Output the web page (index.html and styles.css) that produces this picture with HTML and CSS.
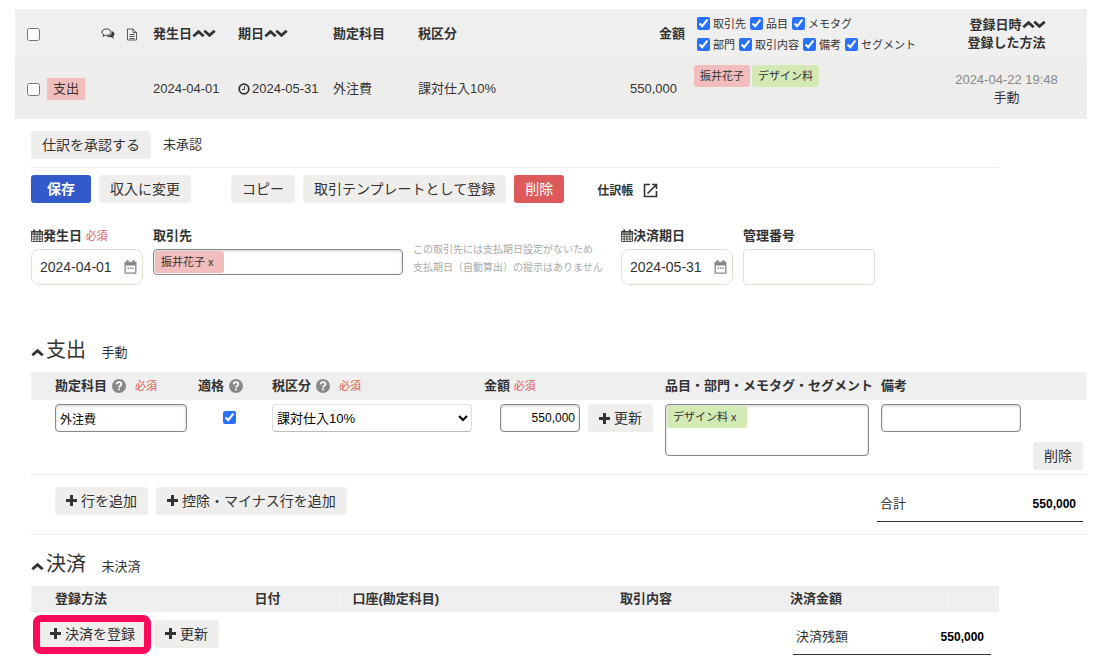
FILE: index.html
```
<!DOCTYPE html>
<html lang="ja">

<head>
    <meta charset="UTF-8">
    <meta name="viewport" content="width=device-width, initial-scale=1.0">
    <title>取引の詳細</title>
    <link rel="stylesheet" href="styles.css">
</head>

<body>
    <!-- Icons -->
    <svg class="sprite" aria-hidden="true">
        <symbol id="i-up" viewBox="0 0 13 9"><path d="M1.300 7.200 6.500 2.600l5.200 4.600" fill="none" stroke="currentColor" stroke-width="2.800"/></symbol>
        <symbol id="i-down" viewBox="0 0 13 9"><path d="M1.300 1.800l5.200 4.600 5.200-4.600" fill="none" stroke="currentColor" stroke-width="2.800"/></symbol>
        <symbol id="i-plus" viewBox="0 0 11 11"><path d="M4 0h3v4h4v3H7v4H4V7H0V4h4z" fill="currentColor"/></symbol>
        <symbol id="i-comments" viewBox="0 0 14 12"><path d="M5.500 1C2.900 1 1 2.400 1 4.200c0 1.100.7 2 1.800 2.600L2.200 8.400l2.300-1.100c.3 0 .7.1 1 .1 2.600 0 4.500-1.400 4.500-3.200S8.100 1 5.500 1z" fill="none" stroke="currentColor"/><path d="M11 3.200c1.500.6 2.500 1.600 2.500 2.900 0 1-.6 1.800-1.500 2.400l1 1.900c-1.300-.2-2.300-.7-3-1.300-1.800.2-3.500-.1-4.500-1 3.500 0 5.700-1.800 5.500-4.900z" fill="currentColor"/></symbol>
        <symbol id="i-file" viewBox="0 0 12 13"><path d="M1.500 1h5.500l3.500 3.500V12h-9zM7 1v3.500h3.500M3.500 6.500h5M3.500 8.500h5M3.500 10.500h5" fill="none" stroke="currentColor" stroke-width=".8"/></symbol>
        <symbol id="i-clock" viewBox="0 0 12 12"><circle cx="6" cy="6" r="4.800" fill="none" stroke="currentColor" stroke-width="1.800"/><path d="M6.500 3.200v3.300H4" fill="none" stroke="currentColor"/></symbol>
        <symbol id="i-cal" viewBox="0 0 12 13"><path d="M.5 2.500h11v10H.5zM.5 5.500h11M.5 7.800h11M.5 10.100h11M3.200 5.500v7M6 5.500v7M8.800 5.500v7" fill="none" stroke="currentColor" stroke-width=".8"/><path d="M0 2h12v3H0z" fill="currentColor" opacity=".6"/><path d="M3.200.5v3M8.800.5v3" stroke="currentColor" stroke-width="1.800"/></symbol>
        <symbol id="i-date" viewBox="0 0 13 14"><path d="M1.200 2.500h10.600v10.700H1.200z" fill="none" stroke="currentColor" stroke-width="1.300"/><path d="M1 2h11v3.500H1zM2.500 0h2v3h-2zM8.500 0h2v3h-2zM3.500 7.500h1.500V9H3.500zM5.800 7.500h1.500V9H5.800zM8.100 7.500h1.500V9H8.100z" fill="currentColor"/></symbol>
        <symbol id="i-help" viewBox="0 0 14 14"><circle cx="7" cy="7" r="7" fill="#888"/><path d="M4.600 5.400C4.700 3.900 5.700 3.200 7 3.200s2.400.8 2.400 2C9.400 6.700 7 6.800 7 8.600" fill="none" stroke="#fff" stroke-width="1.700"/><path d="M6.100 9.600h1.800v1.700H6.100z" fill="#fff"/></symbol>
        <symbol id="i-open" viewBox="0 0 15 15"><path d="M7 1.500H1.500v12h12V8M9 1.500h4.500V6M13 2 4.500 10.500" fill="none" stroke="currentColor" stroke-width="1.600"/></symbol>
    </svg>

    <!-- Deal list -->
    <table class="deals">
        <colgroup>
            <col class="w-check">
            <col class="w-type">
            <col class="w-icons">
            <col class="w-date">
            <col class="w-due">
            <col class="w-account">
            <col>
            <col class="w-amount">
            <col class="w-tags">
            <col class="w-created">
        </colgroup>
        <thead>
            <tr>
                <th class="check"><input type="checkbox" aria-label="すべて選択"></th>
                <th></th>
                <th><span class="icon-pair"><svg class="icon-comments"><use href="#i-comments"/></svg><svg class="icon-file"><use href="#i-file"/></svg></span></th>
                <th>発生日<svg class="chevron"><use href="#i-up"/></svg><svg class="chevron"><use href="#i-down"/></svg></th>
                <th>期日<svg class="chevron"><use href="#i-up"/></svg><svg class="chevron"><use href="#i-down"/></svg></th>
                <th>勘定科目</th>
                <th>税区分</th>
                <th class="amount-head">金額</th>
                <th class="filters">
                    <div class="filter-row">
                        <label><input type="checkbox" checked>取引先</label>
                        <label><input type="checkbox" checked>品目</label>
                        <label><input type="checkbox" checked>メモタグ</label>
                    </div>
                    <div class="filter-row">
                        <label><input type="checkbox" checked>部門</label>
                        <label><input type="checkbox" checked>取引内容</label>
                        <label><input type="checkbox" checked>備考</label>
                        <label><input type="checkbox" checked>セグメント</label>
                    </div>
                </th>
                <th class="created">登録日時<svg class="chevron"><use href="#i-up"/></svg><svg class="chevron"><use href="#i-down"/></svg><br>登録した方法</th>
            </tr>
        </thead>
        <tbody>
            <tr>
                <td class="check"><input type="checkbox" aria-label="取引を選択"></td>
                <td><span class="type">支出</span></td>
                <td></td>
                <td>2024-04-01</td>
                <td><span class="due"><svg class="icon-clock"><use href="#i-clock"/></svg>2024-05-31</span></td>
                <td>外注費</td>
                <td>課対仕入10%</td>
                <td class="amount">550,000</td>
                <td class="tag-cell"><div class="tags"><span class="tag partner">振井花子</span><span class="tag item">デザイン料</span></div></td>
                <td class="created"><span class="time">2024-04-22 19:48</span><br>手動</td>
            </tr>
        </tbody>
    </table>

    <form class="detail">
        <!-- Approval -->
        <div class="approval">
            <button type="button" class="btn">仕訳を承認する</button>
            <span>未承認</span>
        </div>

        <!-- Actions -->
        <div class="actions">
            <button type="submit" class="btn primary">保存</button>
            <button type="button" class="btn">収入に変更</button>
            <button type="button" class="btn copy">コピー</button>
            <button type="button" class="btn">取引テンプレートとして登録</button>
            <button type="button" class="btn danger">削除</button>
            <a href="#" class="journal">仕訳帳<svg class="icon-open"><use href="#i-open"/></svg></a>
        </div>

        <!-- Basic fields -->
        <div class="fields">
            <div class="field date-field">
                <label for="issue-date"><svg class="icon-cal"><use href="#i-cal"/></svg>発生日 <span class="required">必須</span></label>
                <div class="date-box">
                    <input type="text" id="issue-date" value="2024-04-01">
                    <svg class="icon-date"><use href="#i-date"/></svg>
                </div>
            </div>
            <div class="field partner-field">
                <label for="partner">取引先</label>
                <div class="token-box">
                    <span class="tag partner">振井花子 x</span>
                    <input type="text" id="partner">
                </div>
            </div>
            <p class="hint">この取引先には支払期日設定がないため<br>支払期日（自動算出）の提示はありません</p>
            <div class="field date-field">
                <label for="due-date"><svg class="icon-cal"><use href="#i-cal"/></svg>決済期日</label>
                <div class="date-box">
                    <input type="text" id="due-date" value="2024-05-31">
                    <svg class="icon-date"><use href="#i-date"/></svg>
                </div>
            </div>
            <div class="field">
                <label for="ref-number">管理番号</label>
                <input type="text" id="ref-number" class="ref-number">
            </div>
        </div>

        <!-- Expense lines -->
        <h2><svg class="chevron"><use href="#i-up"/></svg>支出 <small>手動</small></h2>
        <table class="lines">
            <colgroup>
                <col class="l-account">
                <col class="l-qualified">
                <col class="l-tax">
                <col class="l-amount">
                <col class="l-tags">
                <col>
                <col class="l-delete">
            </colgroup>
            <thead>
                <tr>
                    <th class="indent">勘定科目<svg class="icon-help"><use href="#i-help"/></svg><span class="required">必須</span></th>
                    <th>適格<svg class="icon-help"><use href="#i-help"/></svg></th>
                    <th>税区分<svg class="icon-help"><use href="#i-help"/></svg><span class="required">必須</span></th>
                    <th>金額 <span class="required">必須</span></th>
                    <th>品目・部門・メモタグ・セグメント</th>
                    <th>備考</th>
                    <th></th>
                </tr>
            </thead>
            <tbody>
                <tr>
                    <td class="indent"><input type="text" class="text account" aria-label="勘定科目" value="外注費"></td>
                    <td class="qualified"><input type="checkbox" aria-label="適格" checked></td>
                    <td>
                        <select class="tax" aria-label="税区分">
                            <option>課対仕入10%</option>
                        </select>
                    </td>
                    <td>
                        <div class="price-row">
                            <input type="text" class="text price" aria-label="金額" value="550,000">
                            <button type="button" class="btn"><svg class="icon-plus"><use href="#i-plus"/></svg>更新</button>
                        </div>
                    </td>
                    <td>
                        <div class="token-box tall">
                            <span class="tag item">デザイン料 x</span>
                            <input type="text" aria-label="品目・部門・メモタグ・セグメント">
                        </div>
                    </td>
                    <td><input type="text" class="text note" aria-label="備考"></td>
                    <td class="delete"><button type="button" class="btn">削除</button></td>
                </tr>
            </tbody>
        </table>
        <div class="line-footer">
            <button type="button" class="btn"><svg class="icon-plus"><use href="#i-plus"/></svg>行を追加</button>
            <button type="button" class="btn"><svg class="icon-plus"><use href="#i-plus"/></svg>控除・マイナス行を追加</button>
            <div class="total"><span>合計</span><strong>550,000</strong></div>
        </div>

        <!-- Settlement -->
        <h2 class="settle-title"><svg class="chevron"><use href="#i-up"/></svg>決済 <small>未決済</small></h2>
        <table class="payments">
            <colgroup>
                <col class="p-method">
                <col class="p-date">
                <col>
                <col class="p-content">
                <col class="p-amount">
                <col class="p-end">
            </colgroup>
            <thead>
                <tr>
                    <th class="indent">登録方法</th>
                    <th>日付</th>
                    <th>口座(勘定科目)</th>
                    <th>取引内容</th>
                    <th>決済金額</th>
                    <th></th>
                </tr>
            </thead>
        </table>
        <div class="settle-footer">
            <button type="button" class="btn marked"><svg class="icon-plus"><use href="#i-plus"/></svg>決済を登録</button>
            <button type="button" class="btn"><svg class="icon-plus"><use href="#i-plus"/></svg>更新</button>
            <div class="total"><span>決済残額</span><strong>550,000</strong></div>
        </div>
    </form>
</body>

</html>
```
FILE: styles.css
```
* {
    box-sizing: border-box;
}

body {
    margin: 0;
    padding: 9px 17px 0 15px;
    background-color: #fff;
    color: #333;
    font-family: "Liberation Sans", "Noto Sans CJK JP", sans-serif;
    font-size: 13px;
    line-height: 18px;
}

input,
select,
button {
    font-family: inherit;
}

input[type="checkbox"] {
    width: 13px;
    height: 13px;
    margin: 0;
    accent-color: #2871fa;
}

svg {
    flex: none;
}

.sprite {
    position: absolute;
    width: 0;
    height: 0;
}

table {
    width: 100%;
    border-collapse: collapse;
    table-layout: fixed;
}

th,
td {
    padding: 0;
    text-align: left;
    white-space: nowrap;
}

/* Icons */
.chevron {
    width: 13px;
    height: 9px;
    margin-right: -2px;
}

.icon-comments {
    width: 14px;
    height: 12px;
}

.icon-file {
    width: 12px;
    height: 13px;
}

.icon-clock {
    width: 12px;
    height: 12px;
}

.icon-cal {
    width: 12px;
    height: 13px;
    vertical-align: -2px;
}

.icon-date {
    width: 13px;
    height: 14px;
    color: #888;
}

.icon-help {
    width: 14px;
    height: 14px;
    margin: 0 9px 0 5px;
    vertical-align: -3px;
}

.icon-plus {
    width: 11px;
    height: 11px;
    margin-right: 4px;
}

.icon-open {
    width: 15px;
    height: 15px;
}

/* Deal list */
.w-check { width: 32px; }
.w-type { width: 54px; }
.w-icons { width: 52px; }
.w-date { width: 85px; }
.w-due { width: 95px; }
.w-account { width: 85px; }
.w-amount { width: 94px; }
.w-tags { width: 232px; }
.w-created { width: 161px; }

.deals thead tr {
    height: 50px;
    background-color: #efefef;
}

.deals tbody tr {
    height: 60px;
    background-color: #eeedec;
}

.deals .check {
    padding-left: 12px;
}

.deals .check input {
    display: block;
}

.icon-pair {
    display: flex;
    align-items: center;
    gap: 11px;
}

.type {
    display: inline-block;
    padding: 2px 6px;
    background-color: #f1bdbd;
}

.due {
    display: flex;
    align-items: center;
    gap: 2px;
}

.deals .amount-head {
    padding-right: 9px;
    text-align: right;
}

.deals .amount {
    padding-right: 17px;
    text-align: right;
}

.deals .created {
    text-align: center;
}

.time {
    color: #888;
}

.filters {
    padding-left: 3px;
    font-size: 11px;
    font-weight: normal;
}

.filter-row {
    display: flex;
    gap: 4px;
    height: 21px;
}

.filter-row label {
    display: flex;
    align-items: center;
    gap: 3px;
}

.tag-cell {
    padding-top: 6px;
    vertical-align: top;
}

.tags {
    display: flex;
    gap: 2px;
}

.tag {
    flex: none;
    padding: 2px 6px;
    border-radius: 3px;
    font-size: 11px;
}

.tag.partner {
    background-color: #f1bdbd;
}

.tag.item {
    background-color: #d4eab5;
}

/* Buttons */
.btn {
    display: inline-flex;
    flex: none;
    align-items: center;
    justify-content: center;
    height: 28px;
    padding: 0 11px;
    border: none;
    border-radius: 3px;
    background-color: #efeeed;
    color: #333;
    font-size: 14px;
    line-height: 20px;
    white-space: nowrap;
    cursor: pointer;
}

.btn.primary {
    width: 60px;
    background-color: #325acb;
    color: #fff;
    font-weight: bold;
}

.btn.danger {
    background-color: #de5959;
    color: #fff;
}

.btn.copy {
    margin-left: 32px;
}

/* Detail */
.detail {
    padding-left: 16px;
}

.approval {
    display: flex;
    align-items: center;
    gap: 12px;
    margin-right: 88px;
    padding: 12px 0 8px;
    border-bottom: 1px solid #eee;
}

.actions {
    display: flex;
    align-items: center;
    gap: 8px;
    padding-top: 7px;
}

.journal {
    display: flex;
    align-items: center;
    gap: 10px;
    margin-left: 25px;
    padding-top: 3px;
    color: #333;
    font-size: 12px;
    font-weight: bold;
    text-decoration: none;
}

.fields {
    display: flex;
    align-items: flex-start;
    gap: 10px;
    padding-top: 24px;
}

.field label {
    display: block;
    margin-bottom: 4px;
    font-weight: bold;
    white-space: nowrap;
}

.date-field {
    width: 112px;
}

.partner-field {
    width: 250px;
}

.required {
    color: #de5959;
    font-size: 11px;
    font-weight: normal;
}

.date-box {
    display: flex;
    align-items: center;
    height: 36px;
    padding: 0 5px 0 8px;
    border: 1px solid #e0e0d6;
    border-radius: 8px;
}

.date-box input {
    flex: 1;
    min-width: 0;
    padding: 0;
    border: none;
    outline: none;
    background: none;
    color: #333;
    font-size: 14px;
}

.token-box {
    display: flex;
    align-items: flex-start;
    height: 26px;
    padding: 1px;
    border: 1px solid #888;
    border-radius: 4px;
    box-shadow: inset 0 1px 3px #ccc;
}

.token-box.tall {
    width: 204px;
    height: 52px;
}

.token-box .tag.partner {
    padding-right: 10px;
}

.token-box .tag.item {
    padding-right: 10px;
}

.token-box input {
    flex: 1;
    min-width: 0;
    height: 22px;
    padding: 0 4px;
    border: none;
    outline: none;
    background: none;
}

.hint {
    width: 198px;
    margin: 14px 0 0;
    color: #aaa;
    font-size: 10px;
}

.ref-number {
    display: block;
    width: 132px;
    height: 36px;
    padding: 0 8px;
    border: 1px solid #e0e0d6;
    border-radius: 4px;
}

/* Sections */
h2 {
    margin: 0;
    padding: 51px 0 5px;
    font-size: 20px;
    font-weight: normal;
    line-height: 28px;
}

h2 .chevron {
    margin-right: 2px;
}

h2 small {
    margin-left: 10px;
    font-size: 13px;
}

th.indent,
td.indent {
    padding-left: 24px;
}

.l-account { width: 167px; }
.l-qualified { width: 74px; }
.l-tax { width: 212px; }
.l-amount { width: 181px; }
.l-tags { width: 216px; }
.l-delete { width: 60px; }

.lines thead tr {
    height: 28px;
    background-color: #efefef;
}

.lines tbody tr {
    border-bottom: 1px solid #eee;
}

.lines td {
    height: 74px;
    padding-top: 4px;
    padding-bottom: 4px;
    vertical-align: top;
}

.lines .qualified {
    padding: 11px 0 0 25px;
}

.lines .qualified input {
    display: block;
}

.lines .delete {
    padding-right: 4px;
    text-align: right;
    vertical-align: bottom;
}

.delete .btn {
    vertical-align: bottom;
}

.text {
    display: block;
    height: 28px;
    padding: 0 4px;
    border: 1px solid #888;
    border-radius: 4px;
    box-shadow: inset 0 1px 3px #ccc;
    color: #000;
    font-size: 12px;
}

.account {
    width: 132px;
}

.price {
    width: 80px;
    text-align: right;
}

.note {
    width: 140px;
}

.tax {
    display: block;
    width: 200px;
    height: 28px;
    border: 1px solid #ddd;
    border-bottom-color: #bbb;
    border-radius: 4px;
    background-color: #fff;
    color: #000;
    font-size: 13px;
}

.price-row {
    display: flex;
    gap: 8px;
    padding-left: 16px;
}

.line-footer,
.settle-footer {
    display: flex;
    gap: 8px;
}

.line-footer {
    padding: 12px 4px 12px 24px;
    border-bottom: 1px solid #eee;
}

.settle-footer {
    margin-right: 88px;
    padding: 8px 8px 16px;
}

.total {
    display: flex;
    align-items: center;
    justify-content: space-between;
    width: 206px;
    height: 35px;
    margin-left: auto;
    padding: 0 7px 0 3px;
    border-bottom: 1px solid #333;
}

.total strong {
    color: #000;
    font-size: 12px;
}

.settle-footer .total {
    width: 198px;
}

.settle-title {
    padding: 15px 0 5px;
}

.p-method { width: 214px; }
.p-date { width: 98px; }
.p-content { width: 170px; }
.p-amount { width: 171px; }
.p-end { width: 47px; }

.payments {
    width: calc(100% - 88px);
}

.payments th {
    height: 26px;
    padding-left: 9px;
    border-right: 1px solid #ececec;
    background-color: #efefef;
}

.payments th.indent {
    padding-left: 24px;
}

/* Highlight frame drawn over the button */
.marked {
    position: relative;
}

.marked::after {
    content: "";
    position: absolute;
    inset: -5px -5px -6px -6px;
    border: 7px solid #ff0a5b;
    border-radius: 8px;
}
```
